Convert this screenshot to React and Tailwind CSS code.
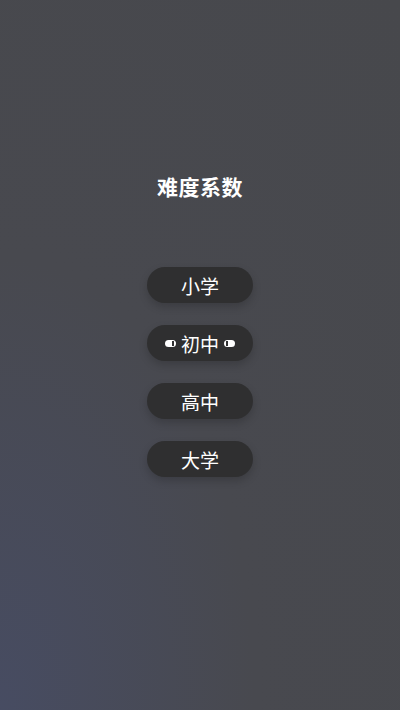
const levels = ['小学', '初中', '高中', '大学'];

function Marker({ side }) {
  return (
    <span className="relative inline-block w-[11px] h-[7px] rounded-full bg-white">
      <span
        className={
          side === 'left'
            ? 'absolute top-[1px] right-[2px] w-[2px] h-[5px] bg-[#2f2f30]'
            : 'absolute top-[1px] left-[2px] w-[2px] h-[5px] bg-[#2f2f30]'
        }
      />
    </span>
  );
}

export default function App() {
  return (
    <div
      className="w-[400px] h-[710px] flex flex-col items-center bg-[radial-gradient(ellipse_at_0%_100%,#474c62_0%,#48494f_45%,#47484c_100%)] font-['Noto_Sans_CJK_SC',sans-serif]"
    >
      <h1 className="mt-[171px] text-[21px] leading-[30px] font-bold text-white tracking-[0.5px]">
        难度系数
      </h1>

      <div className="mt-[66px] flex flex-col gap-[22px]">
        {levels.map((name, i) => (
          <button
            key={name}
            className="w-[106px] h-[36px] rounded-full bg-[#2f2f30] shadow-[0_4px_8px_rgba(0,0,0,0.18)] flex items-center justify-center gap-[5px] text-white text-[19px] leading-none"
          >
            {i === 1 && <Marker side="left" />}
            <span>{name}</span>
            {i === 1 && <Marker side="right" />}
          </button>
        ))}
      </div>
    </div>
  );
}
